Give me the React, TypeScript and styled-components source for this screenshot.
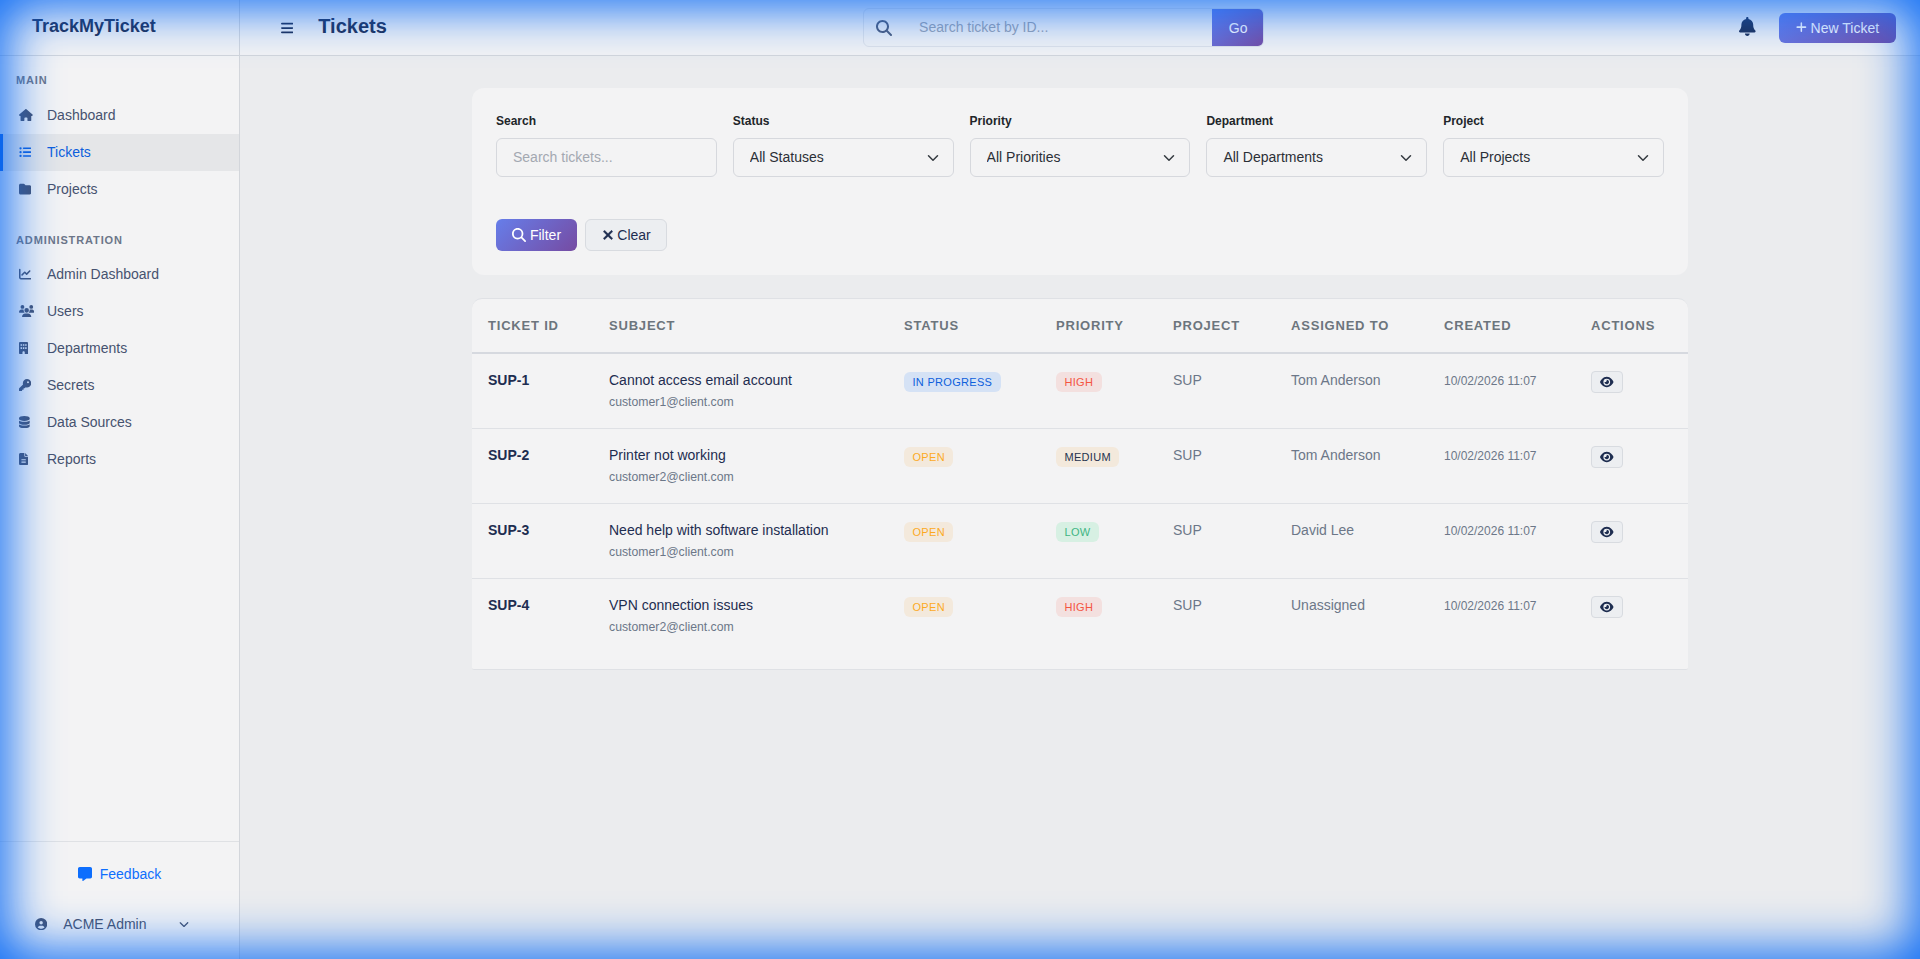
import React from 'react';
import styled, {createGlobalStyle} from 'styled-components';
import {
    FaBars, FaBell, FaBuilding, FaChartLine, FaChevronDown, FaCircleUser, FaDatabase, FaEye,
    FaFileLines, FaFolder, FaHouse, FaKey, FaListUl, FaMagnifyingGlass, FaMessage, FaPlus, FaUsers, FaXmark,
} from 'react-icons/fa6';

// iconWidth: the glyph's width at the 12.25px height used in the nav
const mainNav = [
    {label: 'Dashboard', icon: FaHouse, iconWidth: 13.8},
    {label: 'Tickets', icon: FaListUl, iconWidth: 12.25, active: true},
    {label: 'Projects', icon: FaFolder, iconWidth: 12.25},
];

const adminNav = [
    {label: 'Admin Dashboard', icon: FaChartLine, iconWidth: 12.25},
    {label: 'Users', icon: FaUsers, iconWidth: 15.3},
    {label: 'Departments', icon: FaBuilding, iconWidth: 9.2},
    {label: 'Secrets', icon: FaKey, iconWidth: 12.25},
    {label: 'Data Sources', icon: FaDatabase, iconWidth: 10.7},
    {label: 'Reports', icon: FaFileLines, iconWidth: 9.2},
];

const filters = [
    {label: 'Status', value: 'All Statuses'},
    {label: 'Priority', value: 'All Priorities'},
    {label: 'Department', value: 'All Departments'},
    {label: 'Project', value: 'All Projects'},
];

const columns = [
    {label: 'Ticket ID', width: 121},
    {label: 'Subject', width: 295},
    {label: 'Status', width: 152},
    {label: 'Priority', width: 117},
    {label: 'Project', width: 118},
    {label: 'Assigned To', width: 153},
    {label: 'Created', width: 147},
    {label: 'Actions', width: 113},
];

type Tone = 'blue' | 'amber' | 'red' | 'navy' | 'green';

const tones: Record<Tone, {bg: string; fg: string}> = {
    blue: {bg: '#d5e2f5', fg: '#0d5fdc'},
    amber: {bg: '#f3e9dc', fg: '#fca91f'},
    red: {bg: '#f3e0df', fg: '#f4553f'},
    navy: {bg: '#f3e9dc', fg: '#26334f'},
    green: {bg: '#d7f0e3', fg: '#3fb583'},
};

const tickets: {
    id: string;
    subject: string;
    email: string;
    status: string;
    statusTone: Tone;
    priority: string;
    priorityTone: Tone;
    assignee: string;
}[] = [
    {id: 'SUP-1', subject: 'Cannot access email account', email: 'customer1@client.com', status: 'In Progress', statusTone: 'blue', priority: 'High', priorityTone: 'red', assignee: 'Tom Anderson'},
    {id: 'SUP-2', subject: 'Printer not working', email: 'customer2@client.com', status: 'Open', statusTone: 'amber', priority: 'Medium', priorityTone: 'navy', assignee: 'Tom Anderson'},
    {id: 'SUP-3', subject: 'Need help with software installation', email: 'customer1@client.com', status: 'Open', statusTone: 'amber', priority: 'Low', priorityTone: 'green', assignee: 'David Lee'},
    {id: 'SUP-4', subject: 'VPN connection issues', email: 'customer2@client.com', status: 'Open', statusTone: 'amber', priority: 'High', priorityTone: 'red', assignee: 'Unassigned'},
];

const SelectChevron = () => (
    <StyledChevron viewBox="0 0 16 16" fill="none" stroke="#343a40" strokeWidth="2" strokeLinecap="round" strokeLinejoin="round">
        <path d="M2 5l6 6 6-6" />
    </StyledChevron>
);

const App = () => {
    return (
        <StyledApp>
            <GlobalStyle />
            <StyledSidebar>
                <StyledBrand>TrackMyTicket</StyledBrand>
                <StyledNav>
                    <StyledSectionLabel>Main</StyledSectionLabel>
                    {mainNav.map(item => (
                        <StyledNavItem key={item.label} $active={item.active}>
                            <StyledNavIcon $active={item.active} $iconWidth={item.iconWidth}><item.icon /></StyledNavIcon>
                            {item.label}
                        </StyledNavItem>
                    ))}
                    <StyledSectionLabel $spaced>Administration</StyledSectionLabel>
                    {adminNav.map(item => (
                        <StyledNavItem key={item.label}>
                            <StyledNavIcon $iconWidth={item.iconWidth}><item.icon /></StyledNavIcon>
                            {item.label}
                        </StyledNavItem>
                    ))}
                </StyledNav>
                <StyledSidebarFooter>
                    <StyledFeedback><FaMessage />Feedback</StyledFeedback>
                    <StyledUser>
                        <FaCircleUser />
                        <StyledUserName>ACME Admin</StyledUserName>
                        <FaChevronDown />
                    </StyledUser>
                </StyledSidebarFooter>
            </StyledSidebar>

            <StyledMain>
                <StyledHeader>
                    <StyledHeaderLeft>
                        <StyledMenuButton><FaBars /></StyledMenuButton>
                        <StyledPageTitle>Tickets</StyledPageTitle>
                    </StyledHeaderLeft>
                    <StyledTopSearch>
                        <StyledTopSearchIcon><FaMagnifyingGlass /></StyledTopSearchIcon>
                        <StyledTopSearchInput placeholder="Search ticket by ID..." />
                        <StyledGoButton>Go</StyledGoButton>
                    </StyledTopSearch>
                    <StyledHeaderRight>
                        <StyledBell><FaBell /></StyledBell>
                        <StyledNewTicket><FaPlus />New Ticket</StyledNewTicket>
                    </StyledHeaderRight>
                </StyledHeader>

                <StyledContent>
                    <StyledFilterCard>
                        <StyledFilterGrid>
                            <StyledField>
                                <StyledFieldLabel>Search</StyledFieldLabel>
                                <StyledInput placeholder="Search tickets..." />
                            </StyledField>
                            {filters.map(filter => (
                                <StyledField key={filter.label}>
                                    <StyledFieldLabel>{filter.label}</StyledFieldLabel>
                                    <StyledSelectWrap>
                                        <StyledSelect defaultValue={filter.value}>
                                            <option>{filter.value}</option>
                                        </StyledSelect>
                                        <SelectChevron />
                                    </StyledSelectWrap>
                                </StyledField>
                            ))}
                        </StyledFilterGrid>
                        <StyledFilterActions>
                            <StyledFilterButton><FaMagnifyingGlass />Filter</StyledFilterButton>
                            <StyledClearButton><FaXmark />Clear</StyledClearButton>
                        </StyledFilterActions>
                    </StyledFilterCard>

                    <StyledTableCard>
                        <StyledTable>
                            <thead>
                                <tr>
                                    {columns.map(col => (
                                        <StyledTh key={col.label} $width={col.width}>{col.label}</StyledTh>
                                    ))}
                                </tr>
                            </thead>
                            <tbody>
                                {tickets.map(ticket => (
                                    <StyledRow key={ticket.id}>
                                        <StyledTd><StyledTicketId>{ticket.id}</StyledTicketId></StyledTd>
                                        <StyledTd>
                                            <StyledSubject>{ticket.subject}</StyledSubject>
                                            <StyledEmail>{ticket.email}</StyledEmail>
                                        </StyledTd>
                                        <StyledTd><StyledBadge $tone={ticket.statusTone}>{ticket.status}</StyledBadge></StyledTd>
                                        <StyledTd><StyledBadge $tone={ticket.priorityTone}>{ticket.priority}</StyledBadge></StyledTd>
                                        <StyledTd><StyledMuted>SUP</StyledMuted></StyledTd>
                                        <StyledTd><StyledMuted>{ticket.assignee}</StyledMuted></StyledTd>
                                        <StyledTd><StyledDate>10/02/2026 11:07</StyledDate></StyledTd>
                                        <StyledTd><StyledViewButton><FaEye /></StyledViewButton></StyledTd>
                                    </StyledRow>
                                ))}
                            </tbody>
                        </StyledTable>
                    </StyledTableCard>
                </StyledContent>
            </StyledMain>
            <StyledGlow />
        </StyledApp>
    );
};

const GlobalStyle = createGlobalStyle`
    html, body {
        margin: 0;
        height: 100%;
        overflow: hidden;
    }

    body {
        font-family: "Liberation Sans", Arial, sans-serif;
        font-size: 14px;
        background-color: #ebecee;
        color: #1e2d50;
    }

    * {
        box-sizing: border-box;
    }
`

const StyledApp = styled.div`
    display: flex;
    height: 100vh;
    position: relative;
`

/* blue ring that lies over the whole page */
const StyledGlow = styled.div`
    position: absolute;
    inset: 0;
    pointer-events: none;
    box-shadow: inset 0 0 50px 8px #0d6cf5;
`

const StyledSidebar = styled.aside`
    width: 240px;
    flex-shrink: 0;
    display: flex;
    flex-direction: column;
    background-color: #f3f3f4;
    border-right: 1px solid #d3d6db;
`

const StyledBrand = styled.div`
    height: 56px;
    flex-shrink: 0;
    display: flex;
    align-items: center;
    padding: 0 32px 2px;
    font-size: 18px;
    font-weight: 700;
    color: #1e2d50;
    border-bottom: 1px solid #d3d6db;
`

const StyledNav = styled.nav`
    flex: 1;
    padding-top: 16px;
`

const StyledSectionLabel = styled.div<{$spaced?: boolean}>`
    height: 16px;
    line-height: 16px;
    padding: 0 16px;
    margin: ${p => (p.$spaced ? '24px 0 8px' : '0 0 9px')};
    font-size: 11px;
    font-weight: 700;
    letter-spacing: 0.88px;
    text-transform: uppercase;
    color: #6c7688;
`

const StyledNavItem = styled.a<{$active?: boolean}>`
    display: flex;
    align-items: center;
    height: 37px;
    padding: 0 0 1px 16px;
    border-left: 3px solid ${p => (p.$active ? '#0d5fe0' : 'transparent')};
    background-color: ${p => (p.$active ? '#e5e6e8' : 'transparent')};
    color: ${p => (p.$active ? '#0d5fdc' : '#46526f')};
    font-size: 14px;
`

const StyledNavIcon = styled.span<{$active?: boolean; $iconWidth: number}>`
    width: 28px;
    display: flex;
    align-items: center;
    color: ${p => (p.$active ? '#0d5fdc' : '#46526f')};

    svg {
        height: 12.25px;
        width: ${p => p.$iconWidth}px;
    }
`

const StyledSidebarFooter = styled.div`
    height: 118px;
    flex-shrink: 0;
    border-top: 1px solid #dfe1e4;
    display: flex;
    flex-direction: column;
`

const StyledFeedback = styled.a`
    height: 64px;
    display: flex;
    align-items: center;
    justify-content: center;
    gap: 8px;
    color: #0d6efd;
    font-size: 14px;
`

const StyledUser = styled.div`
    display: flex;
    align-items: center;
    height: 36px;
    padding-left: 35px;
    color: #46526f;
    font-size: 14px;

    svg:first-child {
        font-size: 12.25px;
    }

    svg:last-child {
        font-size: 10px;
    }
`

const StyledUserName = styled.span`
    width: 132px;
    padding-left: 16px;
`

const StyledMain = styled.div`
    flex: 1;
    min-width: 0;
    display: flex;
    flex-direction: column;
`

const StyledHeader = styled.header`
    height: 56px;
    flex-shrink: 0;
    display: flex;
    align-items: center;
    justify-content: space-between;
    padding: 0 24px;
    background-color: #f3f3f4;
    border-bottom: 1px solid #d3d6db;
`

const StyledHeaderLeft = styled.div`
    display: flex;
    align-items: center;
    padding: 0 1px 0 17px;
    gap: 25px;
`

const StyledMenuButton = styled.span`
    display: flex;
    color: #1e2d50;

    svg {
        height: 14px;
        width: 12.25px;
    }
`

const StyledPageTitle = styled.h1`
    margin: 0 0 2px;
    font-size: 20px;
    font-weight: 700;
    color: #1e2d50;
`

const StyledTopSearch = styled.div`
    width: 401px;
    height: 39px;
    display: flex;
    align-items: stretch;
    border: 1px solid #dfe2e7;
    border-radius: 6px;
    overflow: hidden;
`

const StyledTopSearchIcon = styled.span`
    width: 55px;
    flex-shrink: 0;
    display: flex;
    align-items: center;
    padding-left: 12px;
    font-size: 16px;
    color: #4f5c78;
`

const StyledTopSearchInput = styled.input`
    flex: 1;
    min-width: 0;
    padding: 0 0 1px;
    border: 0;
    outline: 0;
    background: transparent;
    font: 14px "Liberation Sans", Arial, sans-serif;

    &::placeholder {
        color: #9aa3b2;
    }
`

const StyledGoButton = styled.button`
    width: 52px;
    flex-shrink: 0;
    margin: -1px;
    border: 0;
    background: linear-gradient(135deg, #667eea, #764ba2);
    color: #fff;
    font: 14px "Liberation Sans", Arial, sans-serif;
`

const StyledHeaderRight = styled.div`
    display: flex;
    align-items: center;
    gap: 23px;
`

const StyledBell = styled.span`
    display: flex;
    margin-bottom: 3px;
    color: #1e2d50;

    svg {
        height: 19px;
        width: 16.6px;
    }
`

const StyledNewTicket = styled.button`
    height: 30px;
    width: 117px;
    display: flex;
    align-items: center;
    justify-content: center;
    gap: 4px;
    border: 0;
    border-radius: 6px;
    background: linear-gradient(135deg, #667eea, #764ba2);
    color: #fff;
    font: 14px "Liberation Sans", Arial, sans-serif;

    svg {
        height: 12.25px;
        width: 10.7px;
    }
`

const StyledContent = styled.main`
    flex: 1;
    width: 1216px;
    margin: 0 auto;
    padding-top: 32px;
`

const StyledFilterCard = styled.section`
    height: 187px;
    padding: 24px;
    margin-bottom: 23px;
    border-radius: 12px;
    background-color: #f3f3f4;
`

const StyledFilterGrid = styled.div`
    display: grid;
    grid-template-columns: repeat(5, 1fr);
    gap: 16px;
    margin-bottom: 42px;
`

const StyledField = styled.div`
    display: flex;
    flex-direction: column;
    gap: 8px;
`

const StyledFieldLabel = styled.label`
    height: 18px;
    line-height: 18px;
    font-size: 12px;
    font-weight: 700;
    color: #212529;
`

const StyledInput = styled.input`
    height: 39px;
    width: 100%;
    padding: 0 16px 1px;
    border: 1px solid #d6d8dd;
    border-radius: 6px;
    background: transparent;
    outline: 0;
    font: 14px "Liberation Sans", Arial, sans-serif;

    &::placeholder {
        color: #a3a8b1;
    }
`

const StyledSelectWrap = styled.div`
    position: relative;
`

const StyledSelect = styled.select`
    height: 39px;
    width: 100%;
    padding: 0 16px 1px;
    appearance: none;
    border: 1px solid #d6d8dd;
    border-radius: 6px;
    background: transparent;
    outline: 0;
    color: #2b2f36;
    font: 14px "Liberation Sans", Arial, sans-serif;
`

const StyledChevron = styled.svg`
    position: absolute;
    top: 14px;
    right: 15px;
    width: 12px;
    height: 12px;
    pointer-events: none;
`

const StyledFilterActions = styled.div`
    display: flex;
    gap: 8px;
`

const StyledFilterButton = styled.button`
    height: 32px;
    width: 81px;
    display: flex;
    align-items: center;
    justify-content: center;
    gap: 4px;
    border: 0;
    border-radius: 6px;
    background: linear-gradient(135deg, #667eea, #764ba2);
    color: #fff;
    font: 14px "Liberation Sans", Arial, sans-serif;
`

const StyledClearButton = styled.button`
    height: 32px;
    width: 82px;
    display: flex;
    align-items: center;
    justify-content: center;
    gap: 2px;
    border: 1px solid #d8dbe0;
    border-radius: 6px;
    background-color: #eceef1;
    color: #1e2d50;
    font: 14px "Liberation Sans", Arial, sans-serif;

    svg {
        stroke: currentColor;
        stroke-width: 24px;
    }
`

const StyledTableCard = styled.section`
    border-radius: 10px 10px 2px 2px;
    overflow: hidden;
    background-color: #f3f3f4;
    border-top: 1px solid #dfe1e5;
    border-bottom: 1px solid #dfe1e5;
`

const StyledTable = styled.table`
    width: 100%;
    table-layout: fixed;
    border-collapse: collapse;
`

const StyledTh = styled.th<{$width: number}>`
    width: ${p => p.$width}px;
    height: 54px;
    padding: 0 16px;
    text-align: left;
    font-size: 13px;
    font-weight: 700;
    letter-spacing: 0.8px;
    text-transform: uppercase;
    color: #6c757d;
    border-bottom: 2px solid #d6d9df;
`

const StyledRow = styled.tr`
    height: 75px;
    border-bottom: 1px solid #dfe1e5;

    &:last-child {
        height: 90px;
        border-bottom: 0;
    }
`

const StyledTd = styled.td`
    padding: 16px 16px 17px;
    vertical-align: top;
`

const StyledTicketId = styled.div`
    font-weight: 700;
    line-height: 20px;
    color: #1e2d50;
`

const StyledSubject = styled.div`
    line-height: 20px;
    color: #1e2d50;
`

const StyledEmail = styled.div`
    margin-top: 3px;
    line-height: 18px;
    font-size: 12.25px;
    color: #6c7788;
`

const StyledBadge = styled.span<{$tone: Tone}>`
    display: inline-block;
    vertical-align: top;
    height: 20px;
    margin-top: 2px;
    padding: 0 8.5px;
    line-height: 20px;
    border-radius: 6px;
    font-size: 11px;
    letter-spacing: 0.3px;
    text-transform: uppercase;
    background-color: ${p => tones[p.$tone].bg};
    color: ${p => tones[p.$tone].fg};
`

const StyledMuted = styled.div`
    line-height: 20px;
    color: #6c7788;
`

const StyledDate = styled.div`
    margin-top: 1px;
    line-height: 20px;
    font-size: 12px;
    color: #6c7788;
`

const StyledViewButton = styled.button`
    width: 32px;
    height: 22px;
    margin-top: 1px;
    display: flex;
    align-items: center;
    justify-content: center;
    padding: 0;
    border: 1px solid #d8dbe0;
    border-radius: 4px;
    background-color: #eceef1;
    color: #1e2d50;

    svg {
        height: 12px;
        width: 13.5px;
    }
`

export default App;
